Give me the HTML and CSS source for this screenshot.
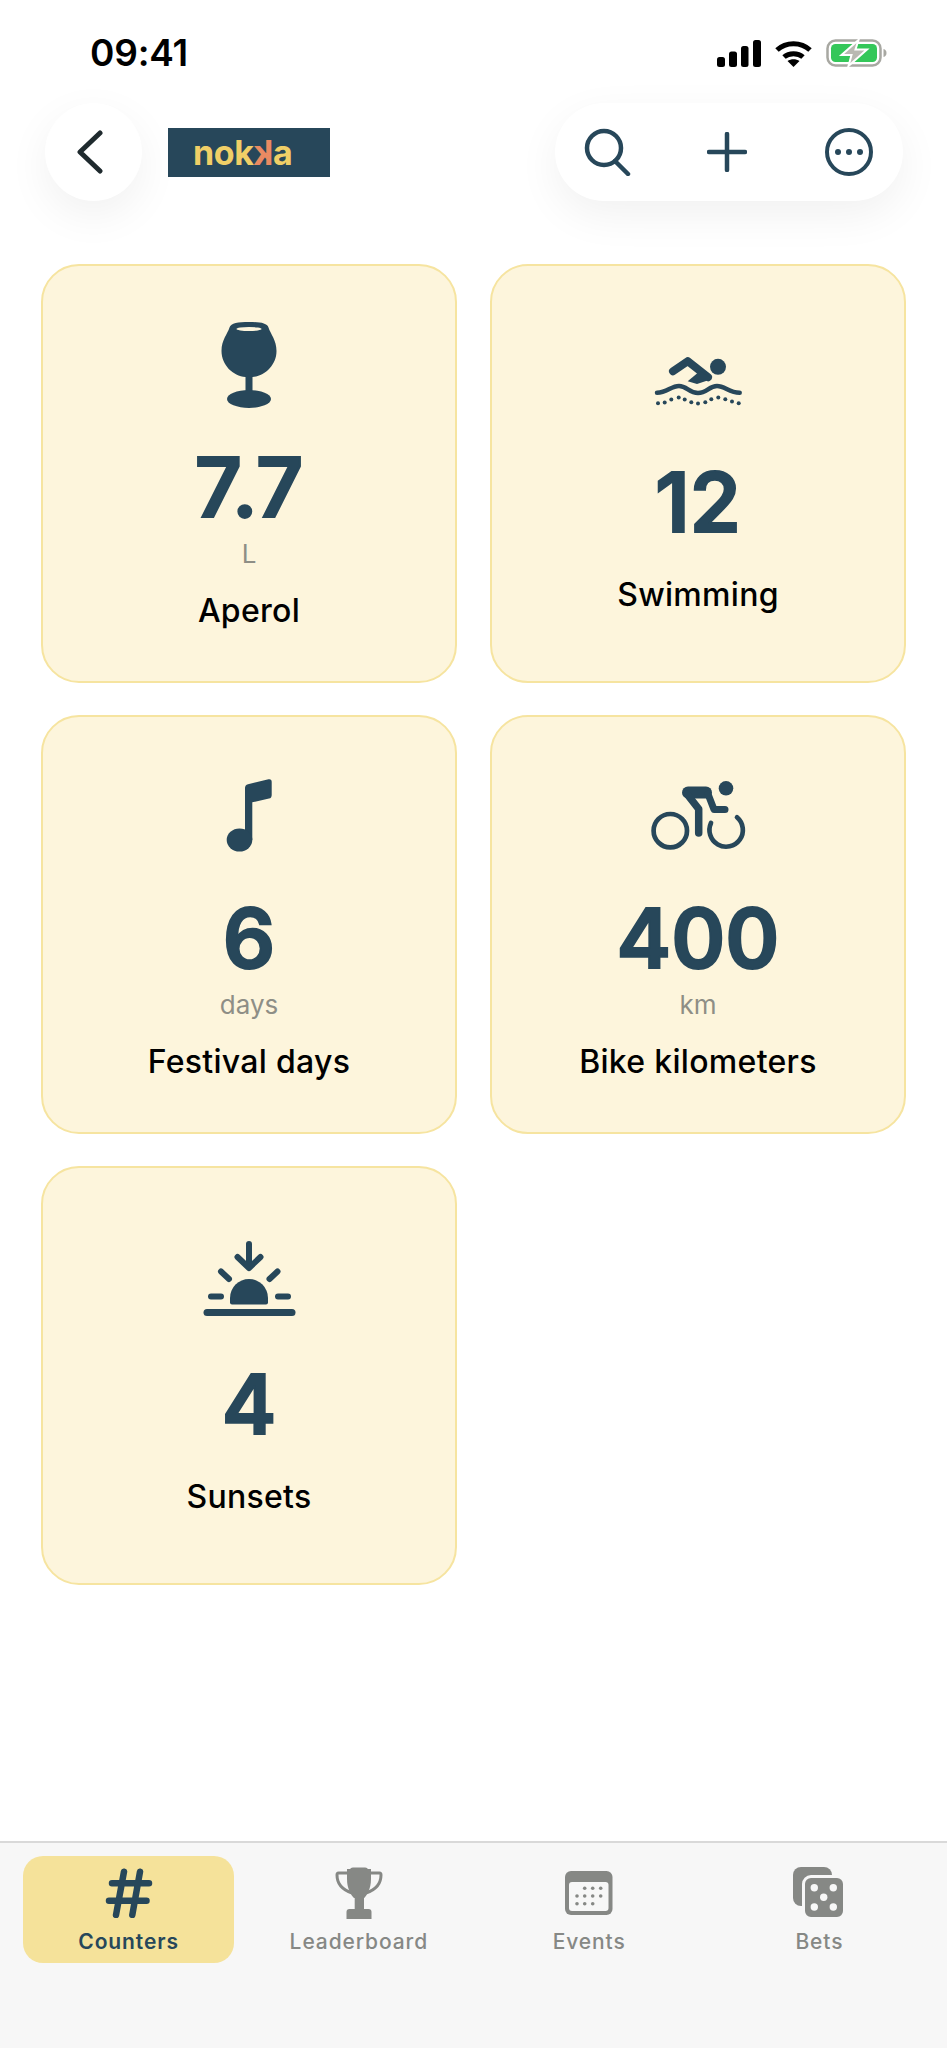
FILE: index.html
```html
<!DOCTYPE html>
<html lang="en">
<head>
    <meta charset="UTF-8">
    <meta name="viewport" content="width=device-width, initial-scale=1.0">
    <title>Counters</title>
    <link rel="stylesheet" href="styles.css">
</head>
<body>
    <div class="status-bar">
        <span class="time">09:41</span>
        <div class="status-icons">
            <svg width="44" height="27" viewBox="0 0 44 27" fill="#000">
                <rect x="0" y="17" width="8" height="10" rx="2.5"/>
                <rect x="12" y="11.5" width="8" height="15.5" rx="2.5"/>
                <rect x="24" y="6" width="7.5" height="21" rx="2.5"/>
                <rect x="36" y="0" width="8" height="27" rx="2.5"/>
            </svg>
            <svg width="37" height="27" viewBox="0 0 37 27" fill="none" stroke="#000" stroke-width="5">
                <path d="M2 10C11 1.500 26 1.500 35 10"/>
                <path d="M9 17C14 12.500 23 12.500 28 17"/>
                <path d="M18.500 27L12.500 21C16 18.500 21 18.500 24.500 21Z" fill="#000" stroke="none"/>
            </svg>
            <svg width="61" height="28" viewBox="0 0 61 28">
                <rect x="1.500" y="1.500" width="53" height="25" rx="8" fill="#fff" stroke="#a8a8a2" stroke-width="2.500"/>
                <rect x="5" y="5" width="46" height="18" rx="4.500" fill="#34c759"/>
                <path d="M57.500 10C59.500 10.500 60.500 12 60.500 14C60.500 16 59.500 17.500 57.500 18Z" fill="#a8a8a2"/>
                <path d="M32.500 1L15.500 16H25.500L22.500 27L41 10.500H29.500Z" fill="#b9b9b2" stroke="#fff" stroke-width="2"/>
            </svg>
        </div>
    </div>

    <header class="top-bar">
        <div class="left-group">
            <button class="back-btn">
                <svg width="28" height="44" viewBox="0 0 28 44" fill="none" stroke="#1f2a2e" stroke-width="5" stroke-linecap="round" stroke-linejoin="round">
                    <path d="M24 3L4 22L24 41"/>
                </svg>
            </button>
            <div class="logo">
                <span class="logo-text">nok<span class="logo-k">k</span>a</span>
            </div>
        </div>
        <div class="actions">
            <svg width="48" height="48" viewBox="0 0 48 48" fill="none" stroke="#27475a" stroke-width="4.500" stroke-linecap="round">
                <circle cx="20" cy="20" r="17"/>
                <path d="M31 33L44 46"/>
            </svg>
            <svg class="plus" width="40" height="40" viewBox="0 0 40 40" fill="none" stroke="#27475a" stroke-width="4.500" stroke-linecap="round">
                <path d="M20 2V38M2 20H38"/>
            </svg>
            <svg width="48" height="48" viewBox="0 0 48 48" fill="none" stroke="#27475a" stroke-width="4">
                <circle cx="24" cy="24" r="22"/>
                <circle cx="13" cy="24" r="3" fill="#27475a" stroke="none"/>
                <circle cx="24" cy="24" r="3" fill="#27475a" stroke="none"/>
                <circle cx="35" cy="24" r="3" fill="#27475a" stroke="none"/>
            </svg>
        </div>
    </header>

    <main class="grid">
        <div class="card">
            <svg class="card-icon" viewBox="0 0 110 93">
                <path d="M55 7C66 7 73 8 74.500 12.500C76.500 19 82.500 25 82.500 36C82.500 50 71 61 58.500 62V76H51.500V62C39 61 27.500 50 27.500 36C27.500 25 33.500 19 35.500 12.500C37 8 44 7 55 7Z"/>
                <ellipse cx="55" cy="84" rx="22" ry="9"/>
                <ellipse cx="55" cy="14" rx="12.500" ry="2" fill="#fdf5dc"/>
            </svg>
            <div class="value">7.7</div>
            <div class="unit">L</div>
            <div class="label">Aperol</div>
        </div>

        <div class="card">
            <svg class="card-icon" viewBox="0 0 110 93">
                <circle cx="75" cy="36.800" r="8"/>
                <path d="M30 41.200L44.700 31.200L65 47.200" fill="none" stroke="#27475a" stroke-width="8" stroke-linecap="round" stroke-linejoin="round"/>
                <path d="M44.700 51.200L57 41L69 49L54 54Z"/>
                <path d="M14 62.800C24 62.800 28 56 36 56C44 56 46 63 55 63C64 63 66 56 74 56C82 56 86 62.800 96.700 62.800" fill="none" stroke="#27475a" stroke-width="4.500" stroke-linecap="round"/>
                <circle cx="15" cy="73.200" r="2"/><circle cx="21.700" cy="72.500" r="2"/>
                <circle cx="28.300" cy="69.500" r="2"/><circle cx="35.700" cy="67.500" r="2"/>
                <circle cx="41.700" cy="69.500" r="2"/><circle cx="48.300" cy="72.200" r="2"/>
                <circle cx="55" cy="73.500" r="2"/><circle cx="62.300" cy="72.200" r="2"/>
                <circle cx="68.300" cy="69.200" r="2"/><circle cx="75.300" cy="67.500" r="2"/>
                <circle cx="82.300" cy="69.200" r="2"/><circle cx="89" cy="71.500" r="2"/>
                <circle cx="95.700" cy="73.200" r="2"/>
            </svg>
            <div class="value">12</div>
            <div class="label">Swimming</div>
        </div>

        <div class="card">
            <svg class="card-icon" viewBox="0 0 110 93">
                <path d="M51 22Q51 19 54 18.200L74.500 13.300Q77.700 12.700 77.700 16V29Q77.700 32 75 32.600L58.300 36.300V74H51Z"/>
                <ellipse cx="45.500" cy="74" rx="12.800" ry="11.500"/>
            </svg>
            <div class="value">6</div>
            <div class="unit">days</div>
            <div class="label">Festival days</div>
        </div>

        <div class="card">
            <svg class="card-icon" viewBox="0 0 110 93">
                <circle cx="83" cy="22.300" r="7.300"/>
                <circle cx="27.300" cy="64.700" r="16.700" fill="none" stroke="#27475a" stroke-width="4.700"/>
                <path d="M68 57A16.700 16.700 0 1 0 94 51.300" fill="none" stroke="#27475a" stroke-width="4.700" stroke-linecap="round"/>
                <path d="M45 26.500H63" fill="none" stroke="#27475a" stroke-width="12" stroke-linecap="round"/>
                <path d="M65 28L71 43.500H82" fill="none" stroke="#27475a" stroke-width="7" stroke-linecap="round" stroke-linejoin="round"/>
                <path d="M44 28L55.700 43V67" fill="none" stroke="#27475a" stroke-width="7.500" stroke-linecap="round" stroke-linejoin="round"/>
            </svg>
            <div class="value">400</div>
            <div class="unit">km</div>
            <div class="label">Bike kilometers</div>
        </div>

        <div class="card">
            <svg class="card-icon" viewBox="0 0 110 93">
                <path d="M38 72.500Q36 72.500 36 70.500V66A19 19 0 0 1 74 66V70.500Q74 72.500 72 72.500Z"/>
                <g fill="none" stroke="#27475a" stroke-width="6" stroke-linecap="round" stroke-linejoin="round">
                    <path d="M13 80.500H98" stroke-width="7"/>
                    <path d="M17 64.500H27M84 64.500H94"/>
                    <path d="M27 39.500L35 47M83.500 39.500L75.500 47"/>
                    <path d="M55 12V35M43.500 25L55 36L66.500 25"/>
                </g>
            </svg>
            <div class="value">4</div>
            <div class="label">Sunsets</div>
        </div>
    </main>

    <nav class="tabs">
        <div class="tab active">
            <div class="tab-icon">
                <svg width="48" height="50" viewBox="0 0 48 50" fill="none" stroke="#27475a" stroke-width="6.500" stroke-linecap="round">
                    <path d="M19 3.700L11 47M35 3.700L27.300 47M7 15.300H44M4 32.700H41.500"/>
                </svg>
            </div>
            <span class="tab-label">Counters</span>
        </div>
        <div class="tab">
            <div class="tab-icon">
                <svg width="60" height="52" viewBox="0 0 60 52" fill="#868885">
                    <path d="M21 3Q21 .5 24 .5H36Q39 .5 39 3V14C39 24 37 29 35 31V43H25.700V31C23 29 21 24 21 14Z"/>
                    <path d="M17.500 52V45Q17.500 42 20.500 42H39.500Q42.500 42 42.500 45V52Z"/>
                    <path d="M21 6H9.500Q8 6 8 8C8 17 14 23 23 26M39 6H50.500Q52 6 52 8C52 17 46 23 37 26" fill="none" stroke="#868885" stroke-width="3"/>
                    <path d="M18 2H42V12C42 22 38 28 35 31H25C22 28 18 22 18 12Z"/>
                </svg>
            </div>
            <span class="tab-label">Leaderboard</span>
        </div>
        <div class="tab">
            <div class="tab-icon">
                <svg width="48" height="44" viewBox="0 0 48 44">
                    <rect width="47.500" height="44" rx="6" fill="#868885"/>
                    <rect x="4" y="11" width="39.500" height="29" rx="3" fill="#f7f7f7"/>
                    <g fill="#868885">
                        <circle cx="19.700" cy="17.300" r="1.800"/><circle cx="27.700" cy="17.300" r="1.800"/><circle cx="35.700" cy="17.300" r="1.800"/>
                        <circle cx="12" cy="25" r="1.800"/><circle cx="19.700" cy="25" r="1.800"/><circle cx="27.700" cy="25" r="1.800"/><circle cx="35.700" cy="25" r="1.800"/>
                        <circle cx="12" cy="32.700" r="1.800"/><circle cx="19.700" cy="32.700" r="1.800"/><circle cx="27.700" cy="32.700" r="1.800"/>
                    </g>
                </svg>
            </div>
            <span class="tab-label">Events</span>
        </div>
        <div class="tab">
            <div class="tab-icon">
                <svg width="52" height="52" viewBox="0 0 52 52">
                    <rect width="39" height="39" rx="8" fill="#868885"/>
                    <rect x="10.500" y="9.500" width="41" height="42" rx="7.500" fill="#868885" stroke="#f7f7f7" stroke-width="3"/>
                    <g fill="#f7f7f7">
                        <circle cx="21.300" cy="20.700" r="3.700"/><circle cx="40.300" cy="20.700" r="3.700"/>
                        <circle cx="30.700" cy="30.300" r="3.700"/>
                        <circle cx="21.300" cy="40" r="3.700"/><circle cx="40.300" cy="40" r="3.700"/>
                    </g>
                </svg>
            </div>
            <span class="tab-label">Bets</span>
        </div>
    </nav>
</body>
</html>
```

FILE: styles.css
```css
* {
    box-sizing: border-box;
}

body {
    margin: 0;
    width: 947px;
    height: 2048px;
    display: flex;
    flex-direction: column;
    overflow: hidden;
    background-color: #fff;
    font-family: 'Inter', 'Liberation Sans', sans-serif;
    color: #000;
}

/* status bar */
.status-bar {
    height: 103px;
    padding: 33px 60px 0 90px;
    display: flex;
    justify-content: space-between;
    align-items: flex-start;
}

.time {
    font-size: 37px;
    font-weight: 600;
    line-height: 40px;
    letter-spacing: -0.2px;
}

.status-icons {
    display: flex;
    align-items: center;
    gap: 14px;
    padding-top: 6px;
}

/* header */
.top-bar {
    height: 98px;
    padding: 0 44px 0 45px;
    display: flex;
    justify-content: space-between;
    align-items: center;
}

.left-group {
    display: flex;
    align-items: center;
    gap: 26px;
}

.back-btn {
    width: 97px;
    height: 98px;
    padding: 0 8px 0 0;
    border: none;
    border-radius: 50%;
    background-color: #fff;
    box-shadow: 0 14px 44px rgba(0, 0, 0, 0.06);
    display: flex;
    align-items: center;
    justify-content: center;
}

.logo {
    width: 162px;
    height: 49px;
    padding-left: 25px;
    background-color: #27475a;
    display: flex;
    align-items: center;
}

.logo-text {
    font-size: 34px;
    font-weight: 700;
    color: #f0cf67;
    letter-spacing: -0.4px;
}

.logo-k {
    display: inline-block;
    transform: scaleX(-1);
    color: #ea8a62;
}

.actions {
    width: 348px;
    height: 98px;
    padding: 0 30px 0 29px;
    border-radius: 49px;
    background-color: #fff;
    box-shadow: 0 14px 44px rgba(0, 0, 0, 0.06);
    display: flex;
    justify-content: space-between;
    align-items: center;
}

.plus {
    margin-right: 3px;
}

/* counters */
.grid {
    flex: 1;
    padding: 63px 41px 0;
    display: grid;
    grid-template-columns: 1fr 1fr;
    grid-auto-rows: 419px;
    column-gap: 33px;
    row-gap: 32px;
    align-content: start;
}

.card {
    border: 2px solid #f6e4a0;
    border-radius: 38px;
    background-color: #fdf5dc;
    display: flex;
    flex-direction: column;
    align-items: center;
    justify-content: center;
    text-align: center;
}

.card-icon {
    width: 110px;
    height: 93px;
    fill: #27475a;
}

.value {
    margin-top: 29px;
    margin-bottom: -1px;
    font-size: 82px;
    font-weight: 600;
    line-height: 102px;
    color: #27475a;
    -webkit-text-stroke: 2px #27475a;
}

.unit {
    font-size: 26px;
    line-height: 31px;
    color: #8e8e86;
}

.label {
    margin-top: 23px;
    padding-bottom: 3px;
    font-size: 32px;
    font-weight: 450;
    line-height: 38px;
    letter-spacing: 0.3px;
}

/* bottom tabs */
.tabs {
    height: 207px;
    padding: 13px 13px 0;
    border-top: 2px solid #d9d9d9;
    background-color: #f7f7f7;
    display: grid;
    grid-template-columns: repeat(4, 1fr);
    align-items: start;
}

.tab {
    margin: 0 9px 0 10px;
    height: 107px;
    padding-top: 11px;
    border-radius: 20px;
    display: flex;
    flex-direction: column;
    align-items: center;
    color: #868885;
}

.tab.active {
    background-color: #f5e29a;
    color: #27475a;
}

.tab-icon {
    height: 52px;
    display: flex;
    align-items: center;
    justify-content: center;
}

.tab-label {
    margin-top: 10px;
    font-size: 21px;
    font-weight: 500;
    line-height: 26px;
    letter-spacing: 0.9px;
}

.tab.active .tab-label {
    font-weight: 600;
}
```
